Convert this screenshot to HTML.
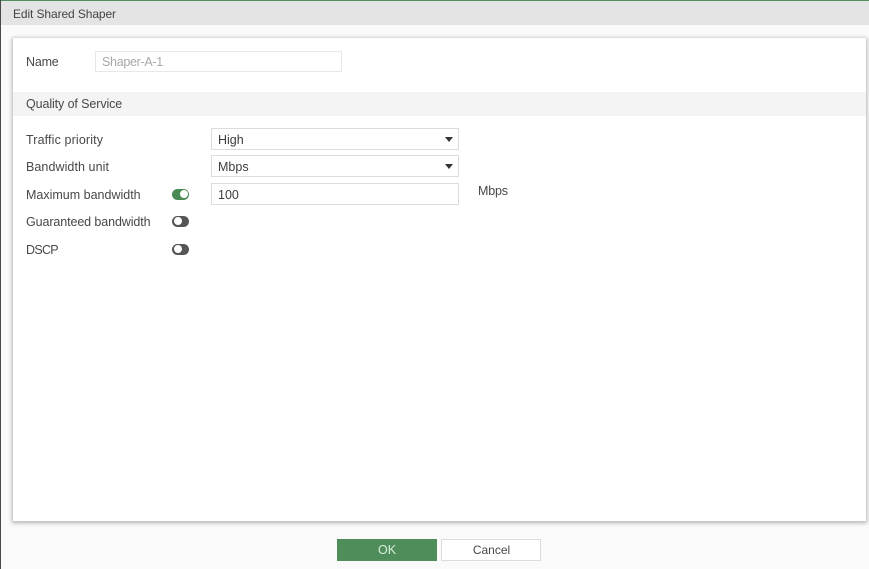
<!DOCTYPE html>
<html>
<head>
<meta charset="utf-8">
<style>
html,body{margin:0;padding:0;width:869px;height:569px;overflow:hidden;background:#fafafa;font-family:"Liberation Sans",sans-serif;font-size:12.5px;color:#484848}
.a{position:absolute;white-space:nowrap}
.t{line-height:16px}
.box{position:absolute;box-sizing:border-box;background:#fff;border:1px solid #dcdcdc;left:211px;width:248px;height:22px}
.arrow{position:absolute;left:445px;width:0;height:0;border-left:4px solid transparent;border-right:4px solid transparent;border-top:5px solid #333}
.tg{position:absolute;left:172px;width:17px;height:11px;border-radius:5.5px;background:#555}
.tg i{position:absolute;left:1.5px;top:1.5px;width:8px;height:8px;border-radius:50%;background:#fff}
.tg.on{background:#4b8c55}
.tg.on i{left:7.5px}
</style>
</head>
<body>
<div class="a" style="left:0;top:0;width:869px;height:1px;background:#4f8f5f"></div>
<div class="a" style="left:0;top:1px;width:869px;height:24px;background:#e4e4e4"></div>
<div class="a" style="left:0;top:0;width:1px;height:569px;background:#4a4a4a"></div>
<div class="a t" style="left:13px;top:6px;font-size:12px;letter-spacing:-.1px;color:#444">Edit Shared Shaper</div>

<div class="a" style="left:13px;top:38px;width:853px;height:483px;background:#fff;box-shadow:0 1px 4px 1px rgba(0,0,0,.28)"></div>

<div class="a t" style="left:26px;top:54px;letter-spacing:-.2px">Name</div>
<div class="a" style="left:95px;top:51px;width:247px;height:21px;box-sizing:border-box;border:1px solid #e8e8e8;background:#fff"></div>
<div class="a t" style="left:102px;top:54px;color:#a8a8a8;letter-spacing:-.3px">Shaper-A-1</div>

<div class="a" style="left:13px;top:92px;width:853px;height:24px;background:#f4f4f4"></div>
<div class="a t" style="left:26px;top:96px;letter-spacing:-.1px">Quality of Service</div>

<div class="a t" style="left:26px;top:132px;letter-spacing:.13px">Traffic priority</div>
<div class="box" style="top:128px"></div>
<div class="a t" style="left:218px;top:132px;color:#3c3c3c">High</div>
<div class="arrow" style="top:137px"></div>

<div class="a t" style="left:26px;top:159px;letter-spacing:.07px">Bandwidth unit</div>
<div class="box" style="top:155px"></div>
<div class="a t" style="left:218px;top:159px;color:#3c3c3c">Mbps</div>
<div class="arrow" style="top:164px"></div>

<div class="a t" style="left:26px;top:187px">Maximum bandwidth</div>
<div class="tg on" style="top:188.5px"><i></i></div>
<div class="box" style="top:183px"></div>
<div class="a t" style="left:218px;top:187px;color:#3c3c3c">100</div>
<div class="a t" style="left:478px;top:183px;letter-spacing:-.2px">Mbps</div>

<div class="a t" style="left:26px;top:214px;letter-spacing:-.1px">Guaranteed bandwidth</div>
<div class="tg" style="top:215.5px"><i></i></div>

<div class="a t" style="left:26px;top:242px;letter-spacing:-.7px">DSCP</div>
<div class="tg" style="top:243.5px"><i></i></div>

<div class="a" style="left:337px;top:539px;width:100px;height:22px;background:#4f8d5b;color:#d8f0d8;text-align:center;line-height:22px">OK</div>
<div class="a" style="left:441px;top:539px;width:100px;height:22px;box-sizing:border-box;background:#fff;border:1px solid #dcdcdc;color:#484848;text-align:center;line-height:20px;font-size:12px;padding-left:1px">Cancel</div>
</body>
</html>
